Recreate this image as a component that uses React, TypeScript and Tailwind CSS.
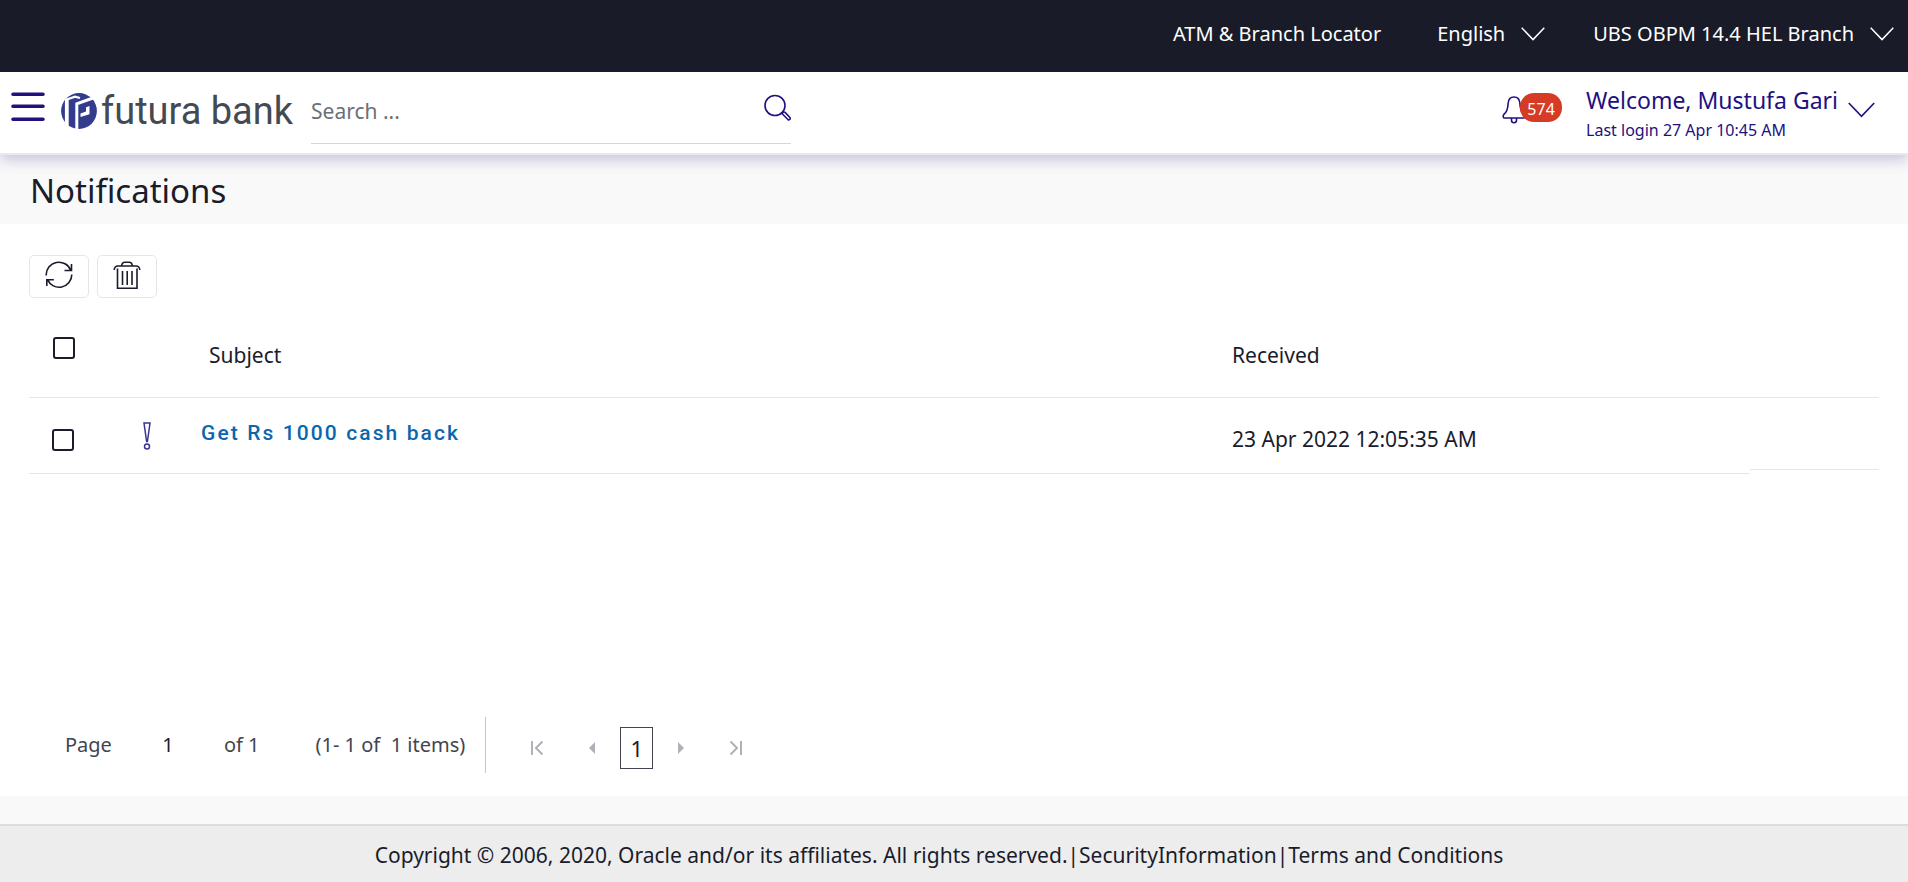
import { useState } from 'react'

const ChevronDown = ({ className }: { className: string }) => (
  <svg viewBox="0 0 24 14" fill="none" stroke="currentColor" strokeWidth="1.5" className={className}>
    <path d="M0.7 0.8 12 12.6 23.3 0.8" />
  </svg>
)

const MenuIcon = () => (
  <svg viewBox="0 0 34 30" stroke="#22107f" strokeWidth="3.6" strokeLinecap="round" className="w-[34px] h-[30px]">
    <path d="M2 2.3h30M2 14.3h30M2 27.3h30" />
  </svg>
)

const LogoMark = () => (
  <svg viewBox="0 0 36 36" className="w-9 h-9">
    <circle cx="18" cy="18" r="17.900" fill="#333b8c" />
    <g fill="none" stroke="#fff">
      <path strokeWidth="3.800" d="M5.800 36V5.500" />
      <path strokeWidth="2.200" d="M5 6.800 14 3.600 19 5" />
      <path strokeWidth="3" d="M15.800 36V10.800L32 5" />
    </g>
    <path fill="#fff" d="M25 14.200 28.500 13v8.200l-9 2.800v-3.600l5.500-1.800z" />
  </svg>
)

const SearchIcon = () => (
  <svg viewBox="0 0 28 28" fill="none" stroke="#22107f" strokeWidth="1.6" className="w-7 h-7">
    <circle cx="12" cy="11.500" r="10" />
    <path d="m19 18.800 1.700-.8q.8-.2 1.400.4l4.800 5q.7.900 0 1.800l-.3.300q-.8.700-1.700 0l-5-5q-.6-.6-.400-1.200z" />
  </svg>
)

const BellIcon = () => (
  <svg viewBox="0 0 24 28" fill="none" stroke="#22107f" strokeWidth="1.600" className="w-6 h-7">
    <path d="M12 1C8 1 6.300 4 6.100 7.500 5.900 13 5 16 1.800 18.500c-.8 1-1 3.500.4 3.500h19.600c1.400 0 1.200-2.500.4-3.500C19 16 18.100 13 17.900 7.500 17.700 4 16 1 12 1zM9.500 22.500v1.700a2.500 2.500 0 0 0 5 0v-1.700" />
  </svg>
)

const RefreshIcon = () => (
  <svg viewBox="0 0 28 28" fill="none" stroke="#1a1c2b" strokeWidth="1.600" className="w-7 h-7">
    <path d="M1.200 14.500A12.700 12.700 0 0 1 25.800 9.500M26.500 3v6.500h-7M26.800 13.500A12.700 12.700 0 0 1 2.500 18.700M1.800 25v-6.300h7" />
  </svg>
)

const TrashIcon = () => (
  <svg viewBox="0 0 28 28" fill="none" stroke="#1a1c2b" strokeWidth="1.600" className="w-7 h-7">
    <path d="M1.200 9Q1.500 5 5 5h18q3.500 0 3.800 4M8.500 5q.5-3.700 3.500-3.700h4q3 0 3.500 3.700M4.500 7.500v19.700h19.500V7.500M9.500 10v14M14.200 10v14M19 10v14" />
  </svg>
)

const AlertIcon = () => (
  <svg viewBox="0 0 8 28" fill="none" stroke="#3b3597" strokeWidth="1.500" className="w-2 h-7">
    <path d="M1 1h6L4.400 19.500h-.8z" />
    <circle cx="4" cy="24.500" r="2.500" />
  </svg>
)

const FirstIcon = () => (
  <svg viewBox="0 0 14 16" fill="none" stroke="currentColor" strokeWidth="2" className="w-[14px] h-4">
    <path d="M2 1v14M12.500 1.500 6 8l6.500 6.500" />
  </svg>
)

const LastIcon = () => (
  <svg viewBox="0 0 14 16" fill="none" stroke="currentColor" strokeWidth="2" className="w-[14px] h-4">
    <path d="M12 1v14M1.500 1.500 8 8l-6.500 6.500" />
  </svg>
)

const PrevIcon = () => (
  <svg viewBox="0 0 8 14" fill="currentColor" className="w-2 h-[14px]"><path d="M7 1v12L1 7z" /></svg>
)

const NextIcon = () => (
  <svg viewBox="0 0 8 14" fill="currentColor" className="w-2 h-[14px]"><path d="M1 1v12l6-6z" /></svg>
)

const Checkbox = ({ label, checked, onChange }: { label: string, checked: boolean, onChange: () => void }) => (
  <input
    type="checkbox"
    aria-label={label}
    checked={checked}
    onChange={onChange}
    className="block appearance-none w-[22px] h-[22px] border-2 border-[#1a1c2b] rounded-[3px] bg-white checked:bg-[#1a1c2b]"
  />
)

const notifications = [
  { id: 1, subject: 'Get Rs 1000 cash back', received: '23 Apr 2022 12:05:35 AM' },
]

const TopBar = () => (
  <div className="h-[72px] pb-1 pr-[14px] bg-[#191c28] text-white text-xl flex items-center justify-end">
    <a href="#locator">ATM &amp; Branch Locator</a>
    <button className="ml-14 flex items-center gap-4">
      English
      <ChevronDown className="w-6 h-[14px]" />
    </button>
    <button className="ml-12 flex items-center gap-4">
      UBS OBPM 14.4 HEL Branch
      <ChevronDown className="w-6 h-[14px]" />
    </button>
  </div>
)

const Header = () => (
  <header className="relative h-[83px] bg-white border-b-2 border-[#e9e9ec] shadow-[0_4px_14px_rgba(34,16,127,0.25)] flex items-start text-[#22107f]">
    <button aria-label="Menu" className="ml-[11px] mt-5"><MenuIcon /></button>
    <a href="#home" className="ml-4 mt-4 flex items-center">
      <LogoMark />
      <span className="ml-1 font-[Roboto] text-[38px] leading-[46px] text-[#434a54]">futura bank</span>
    </a>
    <label className="ml-[18px] w-[480px] h-[72px] flex items-center border-b border-[#d6d6d6]">
      <input type="text" aria-label="Search" placeholder="Search ..." className="flex-1 min-w-0 mt-2 text-[21px] text-[#1a1c2b] placeholder:text-[#6b6f76] outline-none" />
      <SearchIcon />
    </label>
    <div className="ml-auto mt-5 flex items-start">
      <button aria-label="Notifications" className="flex items-start">
        <span className="mt-1"><BellIcon /></span>
        <span className="-ml-1.5 mt-px w-[42px] h-[29px] rounded-[14px] bg-[#d63b25] text-white text-base leading-[32px] text-center">574</span>
      </button>
      <button className="ml-6 mr-[33px] flex items-start gap-[10px] text-left">
        <span>
          <span className="block text-[23px] leading-7 -mt-1.5">Welcome, Mustufa Gari</span>
          <span className="block text-base leading-6 mt-1">Last login 27 Apr 10:45 AM</span>
        </span>
        <ChevronDown className="mt-[10px] w-[27px] h-4" />
      </button>
    </div>
  </header>
)

const Pagination = () => (
  <div className="mt-auto ml-9 pb-[23px] flex items-center text-xl text-[#41454f]">
    <label htmlFor="page">Page</label>
    <input id="page" type="text" defaultValue="1" className="ml-5 w-[72px] text-center text-[#1a1c2b]" />
    <span className="ml-5">of 1</span>
    <span className="ml-14">(1- 1 of&nbsp; 1 items)</span>
    <div className="ml-5 pl-11 pt-1.5 h-14 border-l border-[#c6c6c6] flex items-center text-[#b0b1b8]">
      <button aria-label="First page"><FirstIcon /></button>
      <button aria-label="Previous page" className="ml-11"><PrevIcon /></button>
      <button className="ml-6 w-[33px] h-[42px] border border-[#41454f] text-[22px] text-[#1a1c2b]">1</button>
      <button aria-label="Next page" className="ml-6"><NextIcon /></button>
      <button aria-label="Last page" className="ml-11"><LastIcon /></button>
    </div>
  </div>
)

export default function App() {
  const [selected, setSelected] = useState<number[]>([])
  const allSelected = selected.length === notifications.length

  const toggle = (id: number) =>
    setSelected(selected.includes(id) ? selected.filter(s => s !== id) : [...selected, id])

  return (
    <div className="min-h-screen flex flex-col bg-[#f9f9f9] text-[#1a1c2b] font-['Noto_Sans',sans-serif]">
      <TopBar />
      <Header />
      <h1 className="h-[69px] px-[30px] text-[33px] leading-[72px]">Notifications</h1>

      <main className="flex-1 flex flex-col px-[29px] pt-[31px] bg-white">
        <div className="flex gap-2">
          <button aria-label="Refresh" className="w-[60px] h-[43px] pb-1 border border-[#e6e6e6] rounded-[5px] flex items-center justify-center"><RefreshIcon /></button>
          <button aria-label="Delete" className="w-[60px] h-[43px] pb-1 border border-[#e6e6e6] rounded-[5px] flex items-center justify-center"><TrashIcon /></button>
        </div>

        <table className="mt-4 w-full table-fixed border-separate border-spacing-0 text-left text-[21px]">
          <thead>
            <tr className="h-[84px] [&>th]:border-b [&>th]:border-[#e6e6e6] [&>th]:p-0 [&>th]:font-normal">
              <th className="w-[91px]">
                <div className="pl-6 pb-4">
                  <Checkbox label="Select all" checked={allSelected} onChange={() => setSelected(allSelected ? [] : notifications.map(n => n.id))} />
                </div>
              </th>
              <th className="w-[81px]"></th>
              <th><div className="pl-2">Subject</div></th>
              <th className="w-[28%]">Received</th>
              <th className="w-[129px]"></th>
            </tr>
          </thead>
          <tbody>
            {notifications.map(n => (
              <tr key={n.id} className="h-[76px] [&>td]:p-0 [&>td]:border-[#e6e6e6]">
                <td className="border-b">
                  <div className="pl-[23px] pt-2">
                    <Checkbox label={`Select ${n.subject}`} checked={selected.includes(n.id)} onChange={() => toggle(n.id)} />
                  </div>
                </td>
                <td className="border-b"><div className="pl-[23px]"><AlertIcon /></div></td>
                <td className="border-b">
                  <div className="pb-1">
                    <a href="#notification" className="font-[Roboto] font-medium text-[21px] tracking-widest text-[#0967ae]">{n.subject}</a>
                  </div>
                </td>
                <td className="border-b"><div className="pt-2">{n.received}</div></td>
                <td className="align-top"><div className="h-[72px] border-b border-[#e6e6e6]"></div></td>
              </tr>
            ))}
          </tbody>
        </table>

        <Pagination />
      </main>

      <footer className="mt-7 h-[58px] pt-1 pr-[30px] border-t-2 border-[#dcdcdc] bg-[#ededed] text-[21px] flex items-center justify-center">
        <span>Copyright © 2006, 2020, Oracle and/or its affiliates. All rights reserved.</span>
        <span>|</span>
        <a href="#security">SecurityInformation</a>
        <span>|</span>
        <a href="#terms">Terms and Conditions</a>
      </footer>
    </div>
  )
}
